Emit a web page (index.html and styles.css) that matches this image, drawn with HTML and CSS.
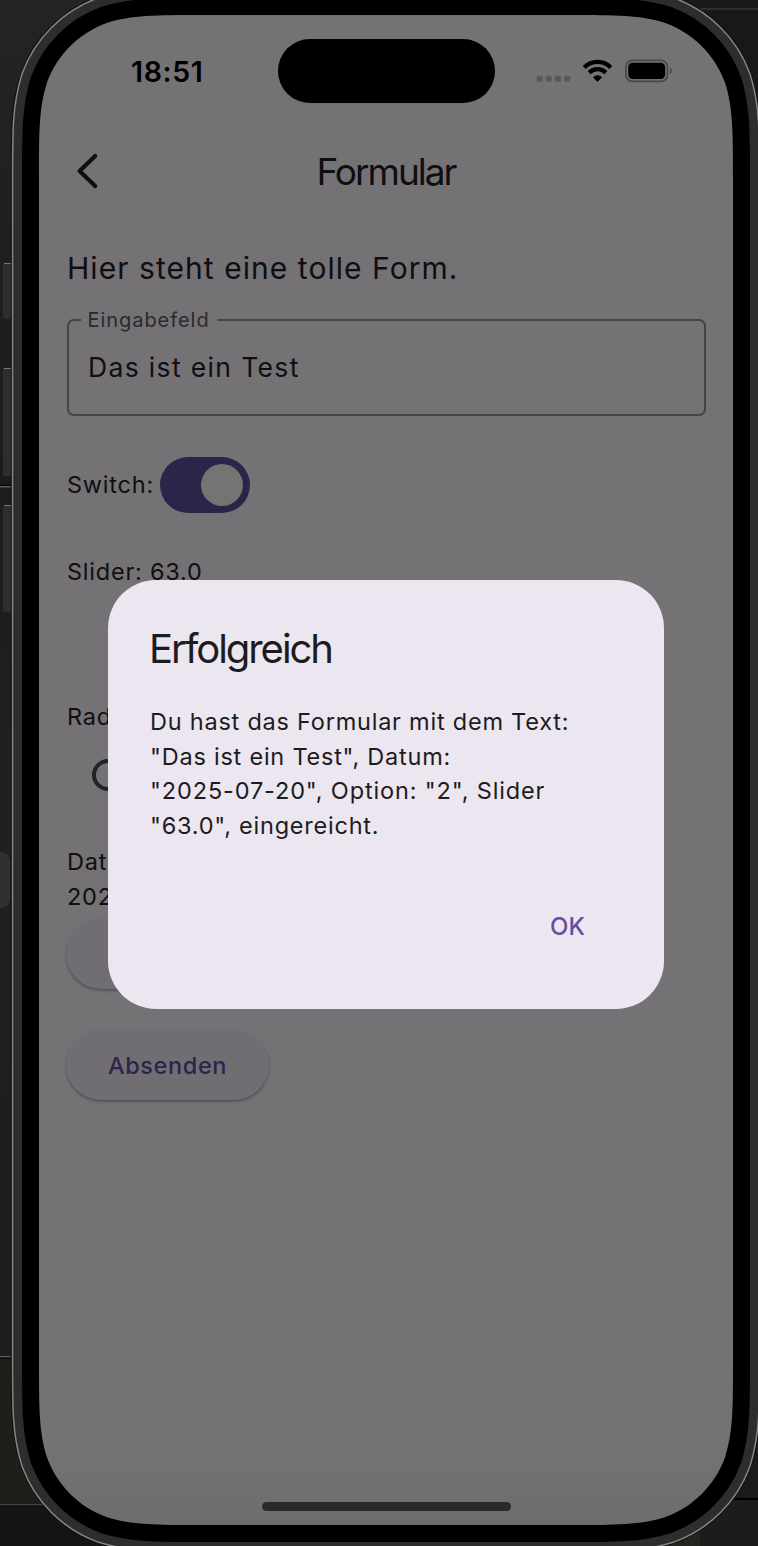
FILE: index.html
```html
<!DOCTYPE html>
<html lang="de">
<head>
<meta charset="utf-8">
<title>Formular</title>
<link rel="stylesheet" href="styles.css">
</head>
<body>
<div class="desktop">
  <svg class="backdrop" width="758" height="1546" viewBox="0 0 758 1546">
    <defs>
      <linearGradient id="wall" x1="0" y1="0" x2="0" y2="1">
        <stop offset="0" stop-color="#242422"/><stop offset=".16" stop-color="#1f1f1d"/><stop offset=".31" stop-color="#1c1c1a"/><stop offset=".5" stop-color="#20201f"/><stop offset=".87" stop-color="#1d1d1d"/><stop offset="1" stop-color="#242420"/>
      </linearGradient>
      <linearGradient id="glass" x1="0" y1="0" x2="0" y2="1">
        <stop offset="0" stop-color="#747275"/><stop offset=".95" stop-color="#747275"/><stop offset="1" stop-color="#6e6c6f"/>
      </linearGradient>
      <path id="outline" d="M39 178.6c0-47.1 0-70.7 8-96c10.1-27.7 31.9-49.5 59.6-59.6c25.3-8 48.9-8 96-8h366.8c47.1 0 70.7 0 96 8c27.7 10.1 49.5 31.9 59.6 59.6c8 25.3 8 48.9 8 96v1182.8c0 47.1 0 70.7-8 96c-10.1 27.7-31.9 49.5-59.6 59.6c-25.3 8-48.9 8-96 8h-366.8c-47.1 0-70.7 0-96-8c-27.7-10.1-49.5-31.9-59.6-59.6c-8-25.3-8-48.9-8-96z"/>
    </defs>
    <rect width="758" height="1546" fill="url(#wall)"/>
    <rect x="650" width="108" height="400" fill="#181817"/>
    <rect y="1358" width="100" height="147" fill="#1e1e1b"/>
    <rect y="1505" width="300" height="41" fill="#141414"/>
    <rect y="1504" width="60" height="1" fill="#444"/>
    <path d="M0 1356.8h14M0 486.8h14" stroke="#5b5b5b" stroke-width="1.4"/>
    <path d="M0 1358.2h14M0 485.3h14" stroke="#080808" stroke-width="1.4"/>
    <path d="M690 9h68" stroke="#363636" stroke-width="1.5"/>
    <rect x="700" y="1400" width="58" height="98" fill="#1b1b1b"/>
    <rect x="700" y="1500" width="58" height="46" fill="#1c1c1b"/>
    <path d="M730 1499h28" stroke="#000" stroke-width="2"/>
    <rect x="-20" y="852" width="30" height="56" rx="9" fill="#30302e"/>
    <g fill="#2e2e2e">
      <rect x="3" y="263" width="20" height="56" rx="3"/><rect x="3" y="368" width="20" height="108" rx="3"/><rect x="3" y="505" width="20" height="107" rx="3"/>
    </g>
    <path d="M4 263.5h8M4 368.5h8M4 505.5h8" stroke="#777"/>
    <g fill="none">
      <use href="#outline" stroke="#101010" stroke-width="56.4"/>
      <use href="#outline" stroke="#858585" stroke-width="54.4"/>
      <use href="#outline" stroke="#2d2d2d" stroke-width="51.4"/>
      <use href="#outline" stroke="#000" stroke-width="34"/>
    </g>
    <use href="#outline" fill="url(#glass)"/>
  </svg>

  <div class="screen">
    <header class="status">
      <span class="clock">18:51</span>
      <span class="island"></span>
      <svg class="indicators" width="140" height="26" viewBox="0 0 140 26">
        <g fill="#5a585b"><rect x="0.5" y="16.7" width="6.2" height="6" rx="1.6"/><rect x="9.7" y="16.7" width="6.2" height="6" rx="1.6"/><rect x="18.9" y="16.7" width="6.2" height="6" rx="1.6"/><rect x="28.1" y="16.7" width="6.2" height="6" rx="1.6"/></g>
        <g fill="none" stroke="#000" stroke-width="4.3"><path d="M48.2 8.5a18.6 18.6 0 0 1 26.600 0"/><path d="M53.200 13.700a11.600 11.600 0 0 1 16.600 0"/></g>
        <path d="M61.500 22.400l-4-4a5.700 5.700 0 0 1 8 0z" fill="#000" stroke="#000" stroke-width="1" stroke-linejoin="round"/>
        <rect x="89.9" y="1.4" width="41.6" height="21" rx="6.5" fill="none" stroke="#4b494c" stroke-width="1.8"/>
        <rect x="92.2" y="3.8" width="37" height="16.200" rx="4.5" fill="#000"/>
        <path d="M134 9c2.3.6 2.3 5.400 0 6z" fill="#4b494c"/>
      </svg>
    </header>

    <div class="appbar">
      <svg class="back" width="24" height="36" viewBox="0 0 24 36"><path d="M19.2 3L3.600 18L19.200 33" fill="none" stroke="#0f0e11" stroke-width="4.200" stroke-linecap="round" stroke-linejoin="round"/></svg>
      <h1 class="title">Formular</h1>
    </div>

    <main class="form">
      <p class="intro">Hier steht eine tolle Form.</p>
      <fieldset class="field">
        <legend class="field-label">Eingabefeld</legend>
        <div class="field-value">Das ist ein Test</div>
      </fieldset>
      <div class="switch-row"><span class="text switch-label">Switch:</span><span class="switch"><span class="thumb"></span></span></div>
      <p class="text slider-label">Slider: 63.0</p>
      <p class="text radio-label">Radio</p>
      <span class="radio"></span>
      <p class="text date">Datum:<br>2025-07-20</p>
      <div class="button picker"></div>
      <div class="button"><span class="button-text">Absenden</span></div>
    </main>
    <span class="home"></span>
  </div>

  <section class="dialog">
    <h2 class="dialog-title">Erfolgreich</h2>
    <p class="dialog-body">Du hast das Formular mit dem Text:<br>"Das ist ein Test", Datum:<br><span class="summary">"2025-07-20", Option: "2", Slider</span><br>"63.0", eingereicht.</p>
    <div class="actions"><span class="ok">OK</span></div>
  </section>
</div>
</body>
</html>
```
FILE: styles.css
```css
* { box-sizing: border-box; }
body { margin: 0; font-family: Inter, "Liberation Sans", sans-serif; font-weight: 370; background: #1e1e1c; }
h1, h2, p { margin: 0; font-weight: inherit; }
.desktop { position: relative; width: 758px; height: 1546px; overflow: hidden; }
.backdrop { position: absolute; inset: 0; display: block; }
.screen { position: relative; width: 694px; height: 1510px; margin: 15px 25px 0 39px; display: flex; flex-direction: column; color: #0f0e11; }

.status { display: flex; align-items: flex-start; height: 88px; padding-top: 24px; }
.clock { width: 147px; margin-left: 92px; line-height: 65px; font-size: 28.5px; font-weight: 600; color: #000; letter-spacing: 0.6px; }
.island { width: 217px; height: 63.5px; border-radius: 32px; background: #000; margin: 0 41px 0 -0.5px; flex: none; }
.indicators { margin-top: 20px; flex: none; }

.appbar { position: relative; display: flex; align-items: center; justify-content: center; height: 136px; }
.back { position: absolute; left: 37px; top: 50px; }
.title { font-size: 37px; letter-spacing: -2px; line-height: 48px; padding-top: 1px; }

.form { display: flex; flex-direction: column; align-items: flex-start; padding: 8px 28px 0; }
.intro { font-size: 30px; line-height: 42px; letter-spacing: 1.05px; white-space: nowrap; }
.field { width: 639px; height: 108px; margin: 19px 0 0 -0.5px; padding: 0 0 0 20px; border: 2px solid #454346; border-radius: 7px; min-width: 0; }
.field-label { margin-left: -8px; padding: 0 7px; font-size: 20px; line-height: 24px; color: #2b292d; letter-spacing: 0.95px; }
.field-value { font-size: 26.5px; line-height: 71px; letter-spacing: 1.35px; margin-left: -0.5px; }
.text { font-size: 23.5px; line-height: 34.5px; letter-spacing: 0.77px; white-space: nowrap; }
.switch-row { display: flex; align-items: center; height: 56px; margin-top: 41px; }
.switch-label { width: 93px; }
.switch { display: flex; justify-content: flex-end; align-items: center; width: 90px; height: 56px; padding-right: 7px; border-radius: 28px; background: #2d2449; }
.thumb { width: 42px; height: 42px; border-radius: 50%; background: #747472; }
.slider-label { margin-top: 42px; }
.radio-label { margin-top: 110px; }
.radio { width: 32px; height: 32px; margin: 25px 0 0 25px; border: 4px solid #232225; border-radius: 50%; }
.date { margin-top: 54px; }
.button { display: flex; align-items: center; justify-content: center; width: 203px; height: 70px; margin-left: -1px; border-radius: 35px; background: #706e73; box-shadow: 0 2px 3px rgba(0, 0, 0, .24), 0 1px 1px rgba(0, 0, 0, .1); }
.picker { margin: 5px 0 41px -1px; width: 300px; }
.button-text { font-size: 23.5px; font-weight: 480; color: #2d2449; letter-spacing: 0.6px; }
.home { width: 249px; height: 9px; border-radius: 5px; background: #2a292b; margin: auto auto 14px 222.500px; }

.dialog { position: absolute; left: 108px; top: 580px; width: 556px; height: 428.5px; padding: 41px 42px; border-radius: 48px; background: #ebe6ef; color: #1d1b20; display: flex; flex-direction: column; }
.dialog-title { font-size: 40px; line-height: 55px; letter-spacing: -2.05px; margin-left: -1px; }
.dialog-body { margin-top: 29px; font-size: 23.5px; line-height: 34.6px; letter-spacing: 0.77px; white-space: nowrap; }
.summary { letter-spacing: 0.86px; }
.actions { display: flex; justify-content: flex-end; margin-top: 66px; padding-right: 37px; }
.ok { font-size: 24px; line-height: 36px; font-weight: 480; color: #6250a4; }
```
